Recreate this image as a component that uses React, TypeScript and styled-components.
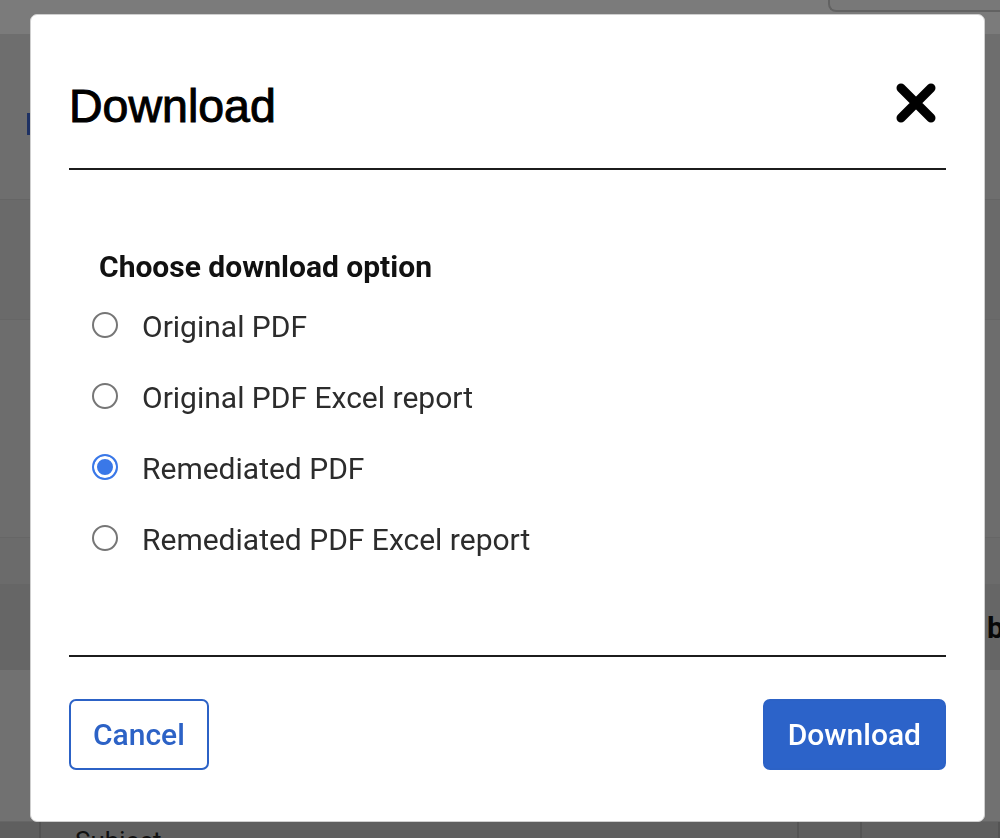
import styled, { createGlobalStyle } from 'styled-components';

const GlobalStyle = createGlobalStyle`
  html, body {
    margin: 0;
    padding: 0;
  }
  body {
    font-family: Roboto, "Liberation Sans", Arial, sans-serif;
    background: #dcdcdc;
    overflow: hidden;
  }
  * {
    box-sizing: border-box;
  }
`;

const options = [
  { id: 'original', label: 'Original PDF' },
  { id: 'original-report', label: 'Original PDF Excel report' },
  { id: 'remediated', label: 'Remediated PDF' },
  { id: 'remediated-report', label: 'Remediated PDF Excel report' },
];

function CloseIcon() {
  return (
    <svg width="42" height="42" viewBox="0 0 42 42" aria-hidden="true">
      <path d="M6 6 L36 36 M36 6 L6 36" stroke="#000" strokeWidth="9" strokeLinecap="round" fill="none" />
    </svg>
  );
}

export default function App() {
  return (
    <>
      <GlobalStyle />
      <Page>
        <TopBar>
          <SearchBox />
        </TopBar>
        <Hero>
          <ActiveMarker />
        </Hero>
        <Band height={120} tone="#d4d4d4" />
        <Band height={218} tone="#dadada" />
        <Band height={47} tone="#d6d6d6" />
        <CardHeader>
          <span />
          <CardTitle>bulk</CardTitle>
        </CardHeader>
        <Band height={152} tone="#e2e2e2" />
        <TableRow>
          <Cell />
          <Cell>Subject</Cell>
          <Cell />
          <Cell />
        </TableRow>
      </Page>

      <Overlay>
        <Modal role="dialog" aria-labelledby="download-title">
          <Header>
            <Title id="download-title">Download</Title>
            <CloseButton aria-label="Close">
              <CloseIcon />
            </CloseButton>
          </Header>

          <Body>
            <GroupLabel>Choose download option</GroupLabel>
            <OptionList>
              {options.map((o) => (
                <Option key={o.id}>
                  <Radio type="radio" name="download" defaultChecked={o.id === 'remediated'} />
                  <span>{o.label}</span>
                </Option>
              ))}
            </OptionList>
          </Body>

          <Footer>
            <Button variant="outline">Cancel</Button>
            <Button variant="primary">Download</Button>
          </Footer>
        </Modal>
      </Overlay>
    </>
  );
}

/* page behind the dialog */

const Page = styled.div`
  height: 838px;
  overflow: hidden;
  display: flex;
  flex-direction: column;
`;

const TopBar = styled.div`
  height: 34px;
  flex: none;
  background: #f6f6f6;
  display: flex;
  justify-content: flex-end;
`;

const SearchBox = styled.div`
  width: 172px;
  height: 12px;
  border-left: 2px solid #c4c4c4;
  border-bottom: 2px solid #c4c4c4;
  border-bottom-left-radius: 8px;
  background: #f0f0f0;
`;

const Hero = styled.div`
  height: 166px;
  flex: none;
  background: #dcdcdc;
  border-bottom: 1px solid #cbcbcb;
  padding: 79px 0 0 27px;
`;

const ActiveMarker = styled.div`
  width: 3px;
  height: 22px;
  background: #3d62c6;
`;

const Band = styled.div<{ height: number; tone: string }>`
  height: ${(p) => p.height}px;
  flex: none;
  background: ${(p) => p.tone};
  border-bottom: 1px solid #cdcdcd;
`;

const CardHeader = styled.div`
  height: 85px;
  flex: none;
  background: #cccccc;
  display: grid;
  grid-template-columns: 985px 1fr;
  align-items: center;
`;

const CardTitle = styled.span`
  font-weight: 700;
  font-size: 30px;
  color: #111;
  padding-left: 2px;
`;

const TableRow = styled.div`
  flex: 1;
  background: #bebebe;
  display: grid;
  grid-template-columns: 36px 763px 63px 1fr;
`;

const Cell = styled.div`
  border-right: 2px solid #a8a8a8;
  padding: 4px 0 0 39px;
  font-size: 26px;
  color: #222;
`;

/* dialog */

const Overlay = styled.div`
  position: fixed;
  inset: 0;
  background: rgba(0, 0, 0, 0.5);
  padding: 14px 0 0 30px;
`;

const Modal = styled.div`
  width: 955px;
  height: 808px;
  background: #fff;
  border: 1px solid #cfcfcf;
  border-radius: 7px;
  padding: 0 38px;
  display: flex;
  flex-direction: column;
`;

const Header = styled.div`
  display: flex;
  align-items: center;
  justify-content: space-between;
  padding: 64px 9px 35px 0;
  border-bottom: 2px solid #1c1c1c;
`;

const Title = styled.h2`
  margin: 0;
  font-family: "Liberation Sans", Arial, sans-serif;
  font-weight: 400;
  font-size: 46.5px;
  line-height: 54px;
  color: #000;
  -webkit-text-stroke: 1px #000;
`;

const CloseButton = styled.button`
  border: none;
  background: none;
  padding: 0;
  display: flex;
  margin-top: -6px;
  cursor: pointer;
`;

const Body = styled.div`
  flex: 1;
  padding: 79px 0 0 23px;
  border-bottom: 2px solid #1c1c1c;
`;

const GroupLabel = styled.div`
  margin-left: 7px;
  font-weight: 700;
  font-size: 30px;
  line-height: 36px;
  color: #111;
`;

const OptionList = styled.div`
  margin-top: 24px;
  display: flex;
  flex-direction: column;
  gap: 35px;
`;

const Option = styled.label`
  display: flex;
  align-items: center;
  gap: 24px;
  font-size: 30px;
  line-height: 36px;
  color: #2c2c2c;
`;

const Radio = styled.input`
  appearance: none;
  width: 26px;
  height: 26px;
  margin: -5px 0 0;
  border: 2px solid #767676;
  border-radius: 50%;
  background: #fff;

  &:checked {
    border-color: #3a78e8;
    background: #3a78e8;
    box-shadow: inset 0 0 0 3px #fff;
  }
`;

const Footer = styled.div`
  display: flex;
  justify-content: space-between;
  padding: 42px 0 51px;
`;

const Button = styled.button<{ variant: 'outline' | 'primary' }>`
  height: 71px;
  padding: ${(p) => (p.variant === 'outline' ? '0 22px' : '0 23px')};
  border: 2px solid #2c62c6;
  border-radius: 7px;
  background: ${(p) => (p.variant === 'primary' ? '#2c63c9' : '#fff')};
  color: ${(p) => (p.variant === 'primary' ? '#fff' : '#2c62c6')};
  font-family: Roboto, "Liberation Sans", Arial, sans-serif;
  font-weight: 500;
  font-size: 30px;
  cursor: pointer;
`;
